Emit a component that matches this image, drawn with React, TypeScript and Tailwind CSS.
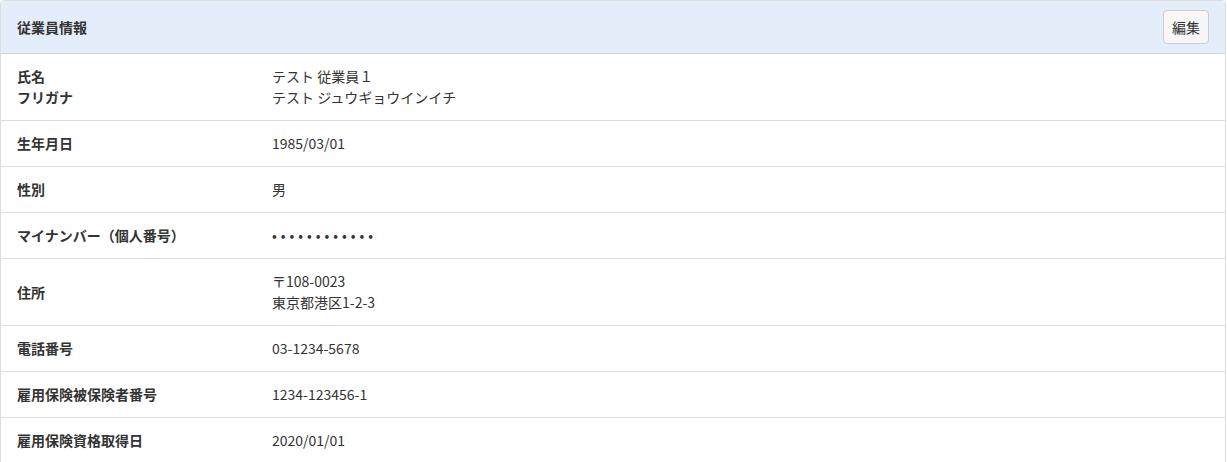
const rows: { label: string[]; value: string[] }[] = [
  { label: ["氏名", "フリガナ"], value: ["テスト 従業員１", "テスト ジュウギョウインイチ"] },
  { label: ["生年月日"], value: ["1985/03/01"] },
  { label: ["性別"], value: ["男"] },
  { label: ["マイナンバー（個人番号）"], value: ["••••••••••••"] },
  { label: ["住所"], value: ["〒108-0023", "東京都港区1-2-3"] },
  { label: ["電話番号"], value: ["03-1234-5678"] },
  { label: ["雇用保険被保険者番号"], value: ["1234-123456-1"] },
  { label: ["雇用保険資格取得日"], value: ["2020/01/01"] },
];

export default function App() {
  return (
    <div className="bg-white pr-[1px] text-[14px] text-[#333] [font-family:'Noto_Sans_CJK_JP',sans-serif]">
      <div className="border border-[#dddddd] rounded-t-[4px] overflow-hidden">
        <div className="flex items-center justify-between h-[53px] bg-[#e4eefa] border-b border-[#d6d6d6] pl-4 pr-4">
          <h2 className="font-bold">従業員情報</h2>
          <button className="h-[34px] px-[8px] bg-[#f7f7f7] border border-[#cccccc] rounded-[4px] text-[14px] text-[#333]">
            編集
          </button>
        </div>
        {rows.map((row, i) => (
          <div key={i} className="flex items-center py-3 leading-[21px] border-b border-[#dddddd]">
            <div className="w-[271px] pl-4 font-bold">
              {row.label.map((l) => (
                <div key={l}>{l}</div>
              ))}
            </div>
            <div className="flex-1">
              {row.value.map((v) => (
                <div key={v} className={v.startsWith("•") ? "tracking-[4px]" : ""}>
                  {v}
                </div>
              ))}
            </div>
          </div>
        ))}
      </div>
    </div>
  );
}
